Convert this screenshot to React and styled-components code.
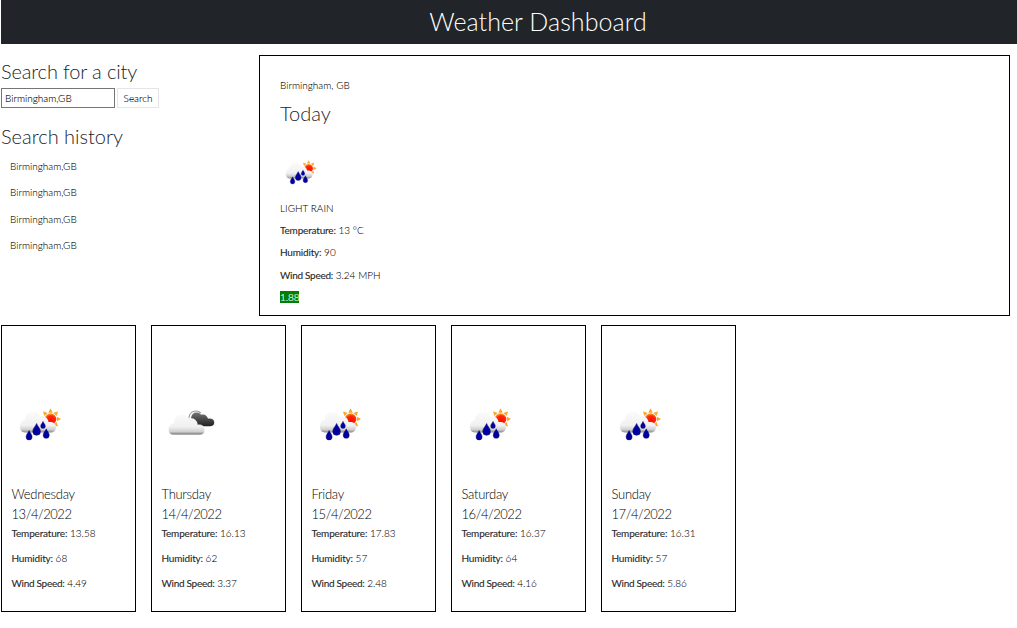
import React from "react";
import styled, { createGlobalStyle } from "styled-components";

const GlobalStyle = createGlobalStyle`
  *, *::before, *::after { box-sizing: border-box; }
  body {
    margin: 0;
    background: #fff;
    color: #000;
    font-family: Lato, "Liberation Sans", sans-serif;
    font-size: 10px;
    font-weight: 300;
    overflow: hidden;
  }
`;

const Page = styled.div`
  height: 628px;
  padding-left: 1px;
`;

const Header = styled.header`
  height: 44px;
  padding-left: 58px;
  background: #212529;
  display: flex;
  justify-content: center;
`;

const Title = styled.h1`
  margin: 0;
  color: #fff;
  font-size: 25px;
  font-weight: 300;
  letter-spacing: 0.06px;
  line-height: 42px;
`;

const Main = styled.main`
  display: flex;
  padding: 11px 7px 0 0;
`;

const Sidebar = styled.aside`
  width: 258px;
  padding-top: 4px;
`;

const Heading = styled.h2`
  margin: 0;
  color: #212529;
  font-size: 20px;
  font-weight: 300;
  letter-spacing: ${(p) => p.$tracking || 0}px;
  line-height: 24px;
`;

const SearchForm = styled.form`
  display: flex;
  gap: 2px;
  margin: 5px 0 16px;
`;

const SearchInput = styled.input`
  width: 114px;
  height: 20px;
  padding: 1px 3px;
  border: 1px solid #767676;
  border-radius: 0;
  background: #fff;
  color: #000;
  font: inherit;
  -webkit-text-stroke: 0.08px;
  outline: none;
`;

const SearchButton = styled.button`
  width: 42px;
  height: 20px;
  padding: 0;
  border: 1px solid #e5e5e5;
  background: #fff;
  color: #000;
  font: inherit;
  -webkit-text-stroke: 0.08px;
`;

const History = styled.ul`
  margin: 5px 0 0;
  padding: 0 0 0 9px;
  list-style: none;
`;

const HistoryItem = styled.li`
  color: #000;
  line-height: 26.33px;
  -webkit-text-stroke: 0.05px;
`;

const Today = styled.section`
  flex: 1;
  height: 261px;
  padding: 17px 20px 0;
  border: 1px solid #000;
`;

const City = styled.div`
  line-height: 24px;
  -webkit-text-stroke: 0.05px;
`;

const TodayHeading = styled(Heading)`
  margin-top: 4px;
`;

const TodayIcon = styled.div`
  height: 72px;
  padding: 29px 0 0 2px;
`;

const Reading = styled.div`
  color: #000;
  line-height: ${(p) => p.$pitch}px;
  white-space: nowrap;
  -webkit-text-stroke: 0.05px;
`;

const Label = styled.span`
  color: #262626;
  font-weight: 400;
  letter-spacing: ${(p) => (p.$tight ? -0.28 : -0.18)}px;
  -webkit-text-stroke: 0.1px;
`;

const UvIndex = styled.span`
  display: inline-block;
  background: #008000;
  color: #fff;
  letter-spacing: -0.1px;
  line-height: 12px;
  -webkit-text-stroke: 0.15px;
`;

const Forecast = styled.section`
  display: flex;
  gap: 15px;
  padding-top: 9px;
`;

const Card = styled.article`
  width: 135px;
  height: 287px;
  padding: 74px 10px 0 9.5px;
  border: 1px solid #000;
`;

const CardIcon = styled.div`
  height: 84px;
  padding-left: 3px;
`;

const DayLine = styled.div`
  color: #000;
  font-size: 13px;
  letter-spacing: ${(p) => p.$tracking}px;
  line-height: 20px;
`;

const CardReadings = styled.div`
  margin-top: -3px;
`;

const Icon = styled.svg`
  display: block;
  overflow: visible;
`;

const Drop = ({ x, y, s = 1 }) => (
  <path
    transform={`translate(${x} ${y}) scale(${s})`}
    d="M0 -5.5C.9 -3 3.5 -1 3.5 1.8A3.5 3.5 0 0 1 -3.5 1.8C-3.5 -1 -.9 -3 0 -5.5Z"
    fill="#0000a0"
    stroke="#171775"
    strokeWidth=".5"
  />
);

const CLOUD =
  "M10 32.500C6.500 32.500 5 29.500 5 26.500C5 22.500 7 20.500 10 20C10 15 13.500 12 18 12C22 12 24.500 14 25.500 17C30 15.500 33 18.500 33.500 22C38 21.500 41 23.500 41 27C41 30 39 32.500 36 32.500Z";

function RainIcon({ size = 50, id }) {
  return (
    <Icon width={size} height={size} viewBox="0 0 50 50">
      <defs>
        <linearGradient id={`c${id}`} x1="0" y1="0" x2="0" y2="1">
          <stop offset="0" stopColor="#fafafa" />
          <stop offset=".65" stopColor="#f1f1f1" />
          <stop offset=".86" stopColor="#cfcfcf" />
          <stop offset="1" stopColor="#888" />
        </linearGradient>
        <radialGradient id={`s${id}`} cx=".55" cy=".65" r=".65">
          <stop offset="0" stopColor="#ff0800" />
          <stop offset=".65" stopColor="#ff2908" />
          <stop offset="1" stopColor="#ffb526" />
        </radialGradient>
      </defs>
      <g fill="#f9a62b">
        {[-135, -90, -45, 0, 45].map((a, i) => (
          <path
            key={i}
            transform={`translate(35.500 19) rotate(${a})`}
            d="M6.300 -2.200L10.200 -.3V.3L6.300 2.200Z"
          />
        ))}
      </g>
      <circle cx="35.500" cy="19" r="5.800" fill={`url(#s${id})`} />
      <path d={CLOUD} fill={`url(#c${id})`} />
      <Drop x={14.1} y={35.3} s={0.88} />
      <Drop x={21.600} y={29.500} s={1.1} />
      <Drop x={28} y={25} s={0.68} />
      <Drop x={31.200} y={33.700} s={0.88} />
    </Icon>
  );
}

function CloudIcon({ id }) {
  return (
    <Icon width="50" height="50" viewBox="0 0 50 50">
      <defs>
        <linearGradient id={`w${id}`} x1="0" y1="0" x2="0" y2="1">
          <stop offset="0" stopColor="#fafafa" />
          <stop offset=".6" stopColor="#f0f0f0" />
          <stop offset=".84" stopColor="#d0d0d0" />
          <stop offset=".95" stopColor="#888" />
          <stop offset="1" stopColor="#aaa" />
        </linearGradient>
        <linearGradient id={`d${id}`} x1="0" y1="0" x2="0" y2="1">
          <stop offset="0" stopColor="#777" />
          <stop offset=".5" stopColor="#484848" />
          <stop offset="1" stopColor="#222" />
        </linearGradient>
      </defs>
      <path
        d="M26 18C26.500 14.500 28.500 12.500 31 12.500C33.500 12.500 35.200 13 36 14.800C39.500 13.500 42 15.500 43 18.700C46.500 18 49.300 19.500 49.300 22.500C49.300 25 47.500 26.300 45 26.300H33Z"
        fill={`url(#d${id})`}
      />
      <path
        d="M23.700 18.500C24 14 27 11 31 11C33 11 34.500 11.700 35.700 13"
        fill="none"
        stroke="#999"
        strokeWidth="1.200"
      />
      <path
        d="M8.500 35C5.200 35 3.500 32.500 3.500 29.500C3.500 26 5.500 23.500 9 23C9 17.500 12 14.500 16.500 14.500C20 14.500 23 16 24 19C28.500 17 32.500 20.500 32.500 25C36.500 24 39.700 26.500 39.700 30C39.700 33 37.500 35 34.500 35Z"
        fill={`url(#w${id})`}
        stroke="#fff"
        strokeWidth=".4"
      />
    </Icon>
  );
}

const history = ["Birmingham,GB", "Birmingham,GB", "Birmingham,GB", "Birmingham,GB"];

const forecast = [
  { day: "Wednesday", date: "13/4/2022", temp: "13.58", humidity: 68, wind: "4.49" },
  { day: "Thursday", date: "14/4/2022", temp: "16.13", humidity: 62, wind: "3.37", cloudy: true },
  { day: "Friday", date: "15/4/2022", temp: "17.83", humidity: 57, wind: "2.48" },
  { day: "Saturday", date: "16/4/2022", temp: "16.37", humidity: 64, wind: "4.16" },
  { day: "Sunday", date: "17/4/2022", temp: "16.31", humidity: 57, wind: "5.86" },
];

export default function App() {
  return (
    <Page>
      <GlobalStyle />
      <Header>
        <Title>Weather Dashboard</Title>
      </Header>
      <Main>
        <Sidebar>
          <Heading $tracking={-0.15}>Search for a city</Heading>
          <SearchForm onSubmit={(e) => e.preventDefault()}>
            <SearchInput defaultValue="Birmingham,GB" />
            <SearchButton>Search</SearchButton>
          </SearchForm>
          <Heading>Search history</Heading>
          <History>
            {history.map((h, i) => (
              <HistoryItem key={i}>{h}</HistoryItem>
            ))}
          </History>
        </Sidebar>
        <Today>
          <City>Birmingham, GB</City>
          <TodayHeading>Today</TodayHeading>
          <TodayIcon>
            <RainIcon size={37.5} id="today" />
          </TodayIcon>
          <Reading $pitch={22.2}>LIGHT RAIN</Reading>
          <Reading $pitch={22.2}><Label>Temperature:</Label> 13 °C</Reading>
          <Reading $pitch={22.2}><Label>Humidity:</Label> 90</Reading>
          <Reading $pitch={22.2}><Label $tight>Wind Speed:</Label> 3.24 MPH</Reading>
          <Reading $pitch={22.2}><UvIndex>1.88</UvIndex></Reading>
        </Today>
      </Main>
      <Forecast>
        {forecast.map((f) => (
          <Card key={f.day}>
            <CardIcon>
              {f.cloudy ? <CloudIcon id={f.day} /> : <RainIcon id={f.day} />}
            </CardIcon>
            <DayLine $tracking={-0.28}>{f.day}</DayLine>
            <DayLine $tracking={-0.45}>{f.date}</DayLine>
            <CardReadings>
              <Reading $pitch={25}><Label>Temperature:</Label> {f.temp}</Reading>
              <Reading $pitch={25}><Label>Humidity:</Label> {f.humidity}</Reading>
              <Reading $pitch={25}><Label $tight>Wind Speed:</Label> {f.wind}</Reading>
            </CardReadings>
          </Card>
        ))}
      </Forecast>
    </Page>
  );
}
